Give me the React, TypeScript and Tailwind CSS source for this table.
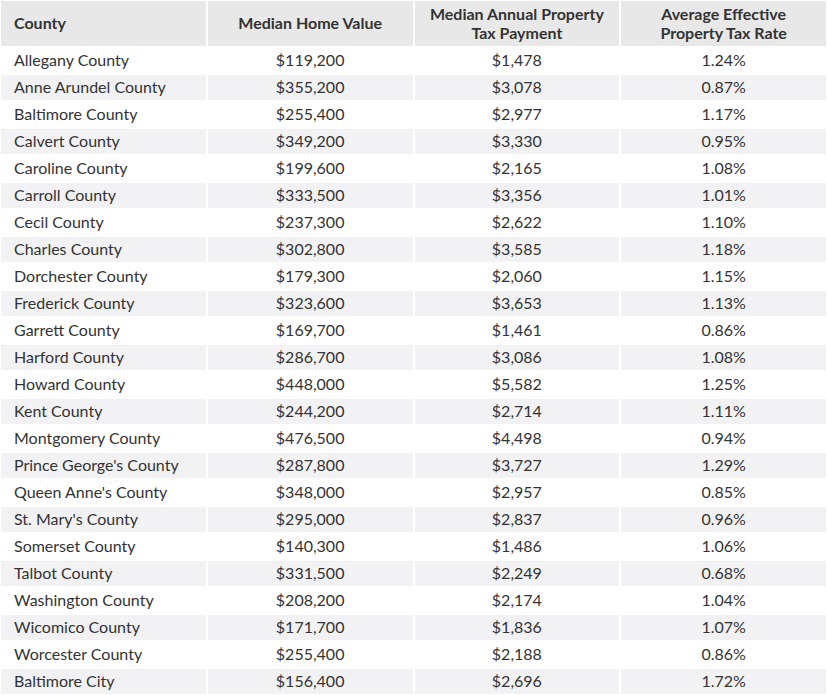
import React from "react";

const rows: [string, string, string, string][] = [
  ["Allegany County", "$119,200", "$1,478", "1.24%"],
  ["Anne Arundel County", "$355,200", "$3,078", "0.87%"],
  ["Baltimore County", "$255,400", "$2,977", "1.17%"],
  ["Calvert County", "$349,200", "$3,330", "0.95%"],
  ["Caroline County", "$199,600", "$2,165", "1.08%"],
  ["Carroll County", "$333,500", "$3,356", "1.01%"],
  ["Cecil County", "$237,300", "$2,622", "1.10%"],
  ["Charles County", "$302,800", "$3,585", "1.18%"],
  ["Dorchester County", "$179,300", "$2,060", "1.15%"],
  ["Frederick County", "$323,600", "$3,653", "1.13%"],
  ["Garrett County", "$169,700", "$1,461", "0.86%"],
  ["Harford County", "$286,700", "$3,086", "1.08%"],
  ["Howard County", "$448,000", "$5,582", "1.25%"],
  ["Kent County", "$244,200", "$2,714", "1.11%"],
  ["Montgomery County", "$476,500", "$4,498", "0.94%"],
  ["Prince George's County", "$287,800", "$3,727", "1.29%"],
  ["Queen Anne's County", "$348,000", "$2,957", "0.85%"],
  ["St. Mary's County", "$295,000", "$2,837", "0.96%"],
  ["Somerset County", "$140,300", "$1,486", "1.06%"],
  ["Talbot County", "$331,500", "$2,249", "0.68%"],
  ["Washington County", "$208,200", "$2,174", "1.04%"],
  ["Wicomico County", "$171,700", "$1,836", "1.07%"],
  ["Worcester County", "$255,400", "$2,188", "0.86%"],
  ["Baltimore City", "$156,400", "$2,696", "1.72%"],
];

export default function App() {
  return (
    <div
      className="w-[827px] h-[695px] bg-white pt-px pl-px pr-px text-[#333333] text-[16px]"
      style={{ fontFamily: "Lato, 'Open Sans', sans-serif" }}
    >
      <div className="grid grid-cols-4 gap-x-[2px] gap-y-[2px] auto-rows-[25px] grid-rows-[45px]">
        <div className="bg-[#e8e8e8] h-[45px] flex items-center pl-[13px] pb-[2px] font-bold">County</div>
        <div className="bg-[#e8e8e8] h-[45px] flex items-center justify-center pb-[2px] font-bold text-center">Median Home Value</div>
        <div className="bg-[#e8e8e8] h-[45px] flex items-center justify-center pb-[2px] font-bold text-center leading-[19px]">
          Median Annual Property
          <br />
          Tax Payment
        </div>
        <div className="bg-[#e8e8e8] h-[45px] flex items-center justify-center pb-[2px] font-bold text-center leading-[19px]">
          Average Effective
          <br />
          Property Tax Rate
        </div>
        {rows.map((r, i) => {
          const bg = i % 2 === 1 ? "bg-[#f2f2f4]" : "bg-white";
          return (
            <React.Fragment key={r[0]}>
              <div className={`${bg} h-[25px] flex items-center pl-[13px] pb-[2px]`}>{r[0]}</div>
              <div className={`${bg} h-[25px] flex items-center justify-center pb-[2px]`}>{r[1]}</div>
              <div className={`${bg} h-[25px] flex items-center justify-center pb-[2px]`}>{r[2]}</div>
              <div className={`${bg} h-[25px] flex items-center justify-center pb-[2px]`}>{r[3]}</div>
            </React.Fragment>
          );
        })}
      </div>
    </div>
  );
}
